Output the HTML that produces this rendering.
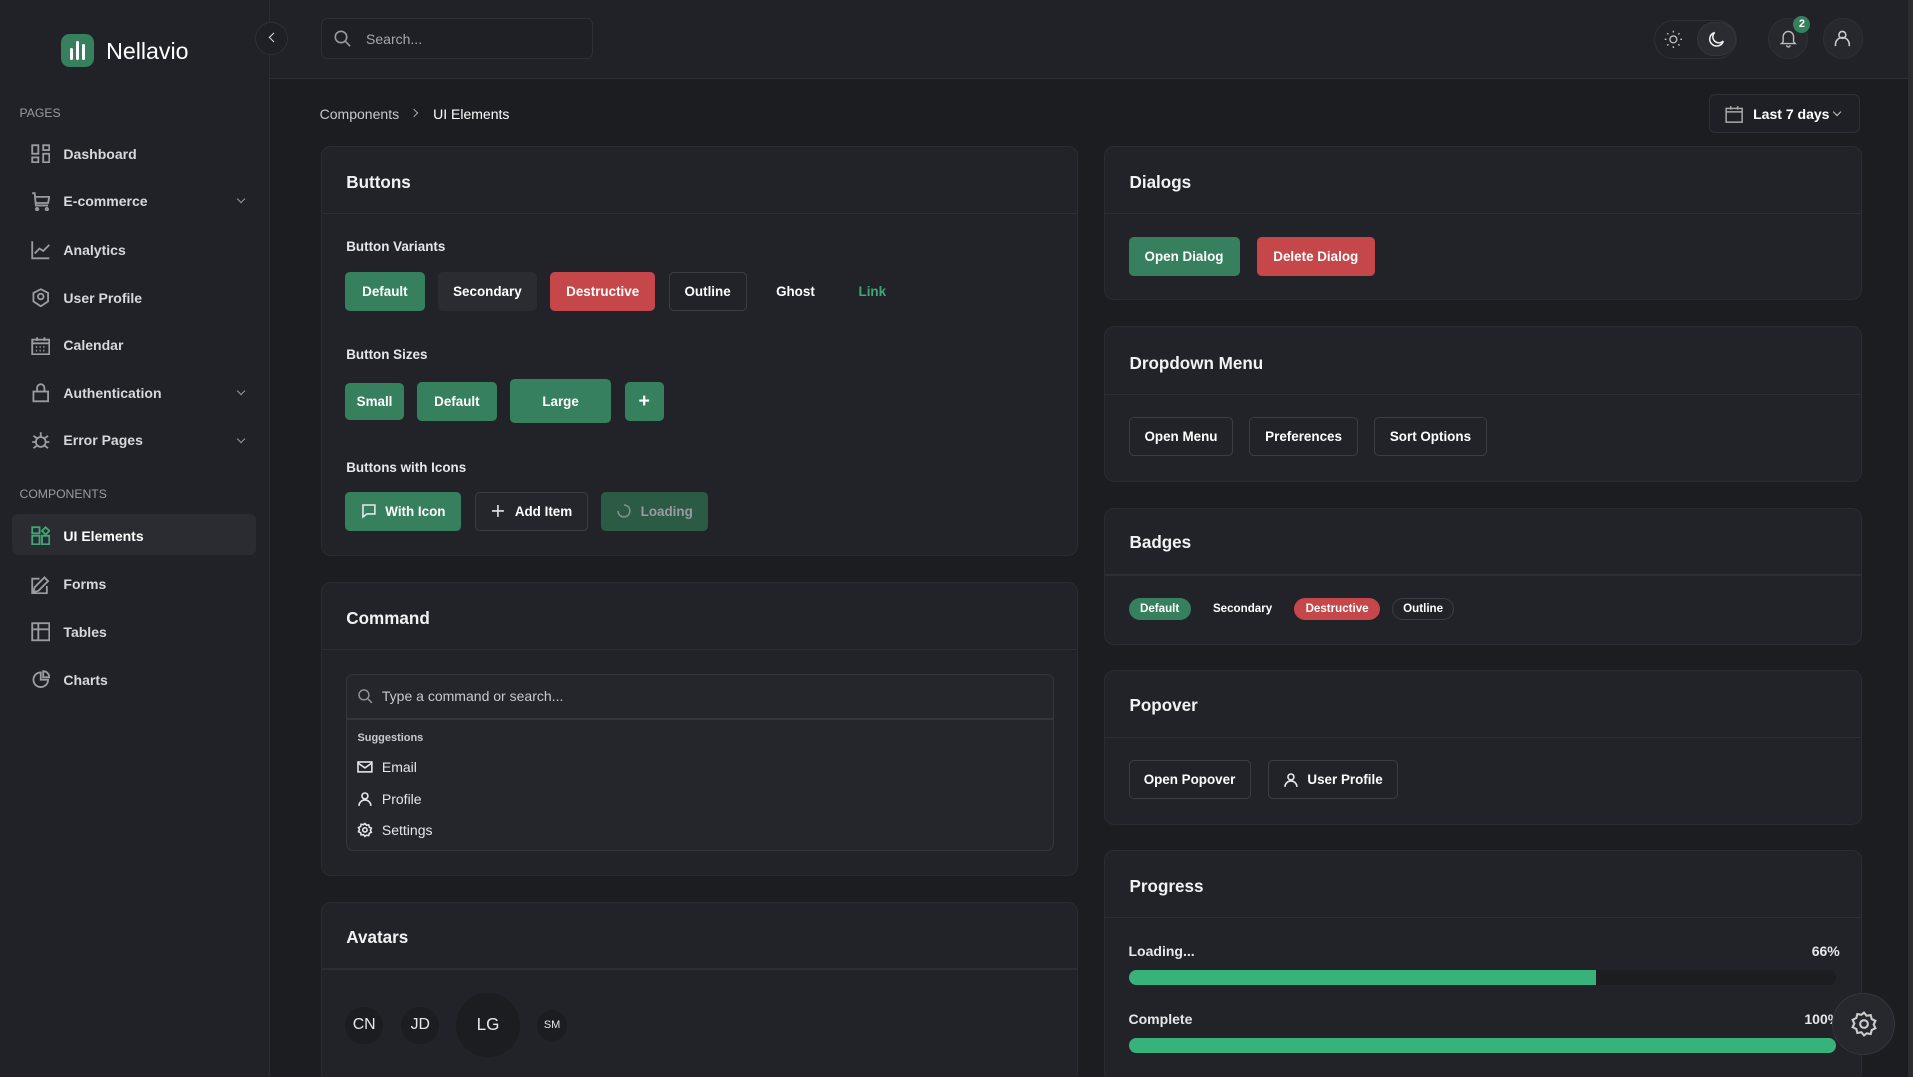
<!DOCTYPE html><html><head><meta charset="utf-8"><style>
*{box-sizing:border-box;margin:0;padding:0}
html,body{width:1913px;height:1077px;overflow:hidden;background:#1b1d21}
#r{zoom:1.22;width:1568px;height:883px;position:relative;font-family:"Liberation Sans",sans-serif;color:#e6e7ea;overflow:hidden;background:#1b1d21}
.a{position:absolute}
.side{left:0;top:0;width:221px;height:883px;background:#202227;border-right:1px solid #2a2c31}
.hdr{left:221px;top:0;right:0;height:65px;background:#202227;border-bottom:1px solid #2c2e33}
.nav{position:absolute;left:25px;font-size:11.5px;font-weight:bold;color:#d7d8db;display:flex;align-items:center;gap:11px}
.nav svg{width:16px;height:16px;fill:none;stroke:#9a9ca2;stroke-width:1.5}
.chev{position:absolute;left:195px;width:5px;height:5px;border-right:1.2px solid #9a9ca2;border-bottom:1.2px solid #9a9ca2;transform:rotate(45deg)}
.sec{position:absolute;left:16px;font-size:10px;color:#9a9ca2}
.card{position:absolute;background:#212328;border:1px solid #2a2c31;border-radius:8px;overflow:hidden}
.card h2{position:absolute;left:20px;font-size:14px;font-weight:bold;color:#f2f2f4}
.card .dv{position:absolute;left:0;right:0;height:1px;background:#2c2e33}
.lbl{position:absolute;left:20px;font-size:11px;font-weight:bold;color:#e6e7ea}
.b{position:absolute;height:32px;border-radius:4px;font-size:11px;font-weight:bold;display:flex;align-items:center;justify-content:center;gap:7px;color:#fff}
.g{background:#36805e}.rd{background:#c5474a}.s{background:#2a2c31}.o{border:1px solid #3a3d42;background:#212328}
.bd{position:absolute;top:490px;height:18px;border-radius:9px;font-size:9.5px;font-weight:bold;display:flex;align-items:center;justify-content:center;color:#fff}
.av{position:absolute;border-radius:50%;background:#1b1d21;display:flex;align-items:center;justify-content:center;font-size:13px;color:#e6e7ea}
.ic{width:13px;height:13px;fill:none;stroke:#e6e7ea;stroke-width:1.6}
</style></head><body><div id="r">
<div class="a side"></div>
<div class="a hdr"></div>
<div class="a" style="left:50px;top:28px;width:27px;height:27px;border-radius:7px;background:#36805e"></div>
<div class="a" style="left:57px;top:39px;width:3px;height:10px;background:#fff;border-radius:2px"></div>
<div class="a" style="left:62px;top:34px;width:3px;height:15px;background:#fff;border-radius:2px"></div>
<div class="a" style="left:67px;top:36px;width:3px;height:13px;background:#fff;border-radius:2px"></div>
<div class="a" style="left:87px;top:31px;font-size:19px;color:#fff">Nellavio</div>
<div class="a" style="left:209px;top:18px;width:27px;height:27px;border-radius:50%;border:1px solid #2e3035;background:#1e2025"></div>
<div class="a" style="left:221px;top:28px;width:6px;height:6px;border-left:1.5px solid #ddd;border-bottom:1.5px solid #ddd;transform:rotate(45deg)"></div>
<div class="a" style="left:263px;top:15px;width:223px;height:33px;border:1px solid #2e3035;border-radius:5px;background:#1e2025"></div>
<svg class="a" style="left:273px;top:24px" width="15" height="15" viewBox="0 0 16 16" fill="none" stroke="#9a9ca2" stroke-width="1.4"><circle cx="7" cy="7" r="5"/><path d="M11 11l4 4"/></svg>
<div class="a" style="left:300px;top:25px;font-size:11.5px;color:#a5a7ad">Search...</div>
<div class="a" style="left:1356px;top:16px;width:68px;height:32px;border-radius:16px;border:1px solid #2e3035"></div>
<svg class="a" style="left:1363px;top:24px" width="17" height="17" viewBox="0 0 24 24" fill="none" stroke="#bbb" stroke-width="1.6"><circle cx="12" cy="12" r="4"/><path d="M12 2v2M12 20v2M2 12h2M20 12h2M4.9 4.9l1.4 1.4M17.7 17.7l1.4 1.4M4.9 19.1l1.4-1.4M17.7 6.3l1.4-1.4"/></svg>
<div class="a" style="left:1391px;top:18px;width:32px;height:28px;border-radius:14px;background:#2a2c31;border:1px solid #34363b"></div>
<svg class="a" style="left:1398px;top:24px" width="17" height="17" viewBox="0 0 24 24" fill="none" stroke="#eee" stroke-width="1.8"><path d="M20 14A8 8 0 1 1 10 4a6 6 0 0 0 10 10z"/></svg>
<div class="a" style="left:1449px;top:15px;width:33px;height:33px;border-radius:50%;background:#26282d;border:1px solid #2e3035"></div>
<svg class="a" style="left:1457px;top:23px" width="17" height="17" viewBox="0 0 24 24" fill="none" stroke="#bbb" stroke-width="1.6"><path d="M6 16V10a6 6 0 0 1 12 0v6l2 2H4z M10 20a2 2 0 0 0 4 0"/></svg>
<div class="a" style="left:1470px;top:13px;width:14px;height:14px;border-radius:50%;background:#36805e;font-size:9px;font-weight:bold;color:#fff;text-align:center;line-height:14px">2</div>
<div class="a" style="left:1494px;top:15px;width:33px;height:33px;border-radius:50%;background:#26282d;border:1px solid #2e3035"></div>
<svg class="a" style="left:1502px;top:23px" width="17" height="17" viewBox="0 0 24 24" fill="none" stroke="#ccc" stroke-width="1.8"><circle cx="12" cy="8" r="4"/><path d="M4 21v-2a6 6 0 0 1 16 0v2"/></svg>
<div class="a" style="left:1564px;top:0;width:4px;height:883px;background:#2a2c31"></div>

<div class="sec" style="top:87px">PAGES</div>
<div class="nav" style="top:118px"><svg viewBox="0 0 16 16"><rect x="1" y="1" width="5" height="7"/><rect x="10" y="1" width="5" height="4"/><rect x="1" y="11" width="5" height="4"/><rect x="10" y="8" width="5" height="7"/></svg>Dashboard</div>
<div class="nav" style="top:157px"><svg viewBox="0 0 16 16"><path d="M1 1h2l1 10h10M4 4h11l-1 5H4"/><circle cx="5" cy="14" r="1"/><circle cx="13" cy="14" r="1"/></svg>E-commerce</div><div class="chev" style="top:161px"></div>
<div class="nav" style="top:197px"><svg viewBox="0 0 16 16"><path d="M1 1v14h14M3 11l4-4 3 2 5-5"/></svg>Analytics</div>
<div class="nav" style="top:236px"><svg viewBox="0 0 16 16"><path d="M8 1l6 3v7l-6 4-6-4V4z"/><circle cx="8" cy="7" r="2.3"/></svg>User Profile</div>
<div class="nav" style="top:275px"><svg viewBox="0 0 16 16"><rect x="1" y="3" width="14" height="12"/><path d="M1 6h14M5 1v3M11 1v3M4 9h1M7 9h1M10 9h1M4 12h1M7 12h1M10 12h1"/></svg>Calendar</div>
<div class="nav" style="top:314px"><svg viewBox="0 0 16 16"><rect x="2" y="7" width="12" height="8"/><path d="M5 7V4a3 3 0 0 1 6 0v3"/></svg>Authentication</div><div class="chev" style="top:318px"></div>
<div class="nav" style="top:353px"><svg viewBox="0 0 16 16"><circle cx="8" cy="9" r="4"/><path d="M1 9h3M12 9h3M2 4l3 2M14 4l-3 2M2 14l3-2M14 14l-3-2M8 5V1"/></svg>Error Pages</div><div class="chev" style="top:357px"></div>
<div class="sec" style="top:399px">COMPONENTS</div>
<div class="a" style="left:10px;top:421px;width:200px;height:34px;border-radius:5px;background:#2a2c31"></div>
<div class="nav" style="top:431px;color:#fff"><svg viewBox="0 0 16 16" style="stroke:#3fa877"><rect x="1" y="8" width="6" height="7"/><rect x="9" y="8" width="6" height="7"/><rect x="1" y="1" width="6" height="5"/><path d="M12 1l3 3-3 3-3-3z"/></svg>UI Elements</div>
<div class="nav" style="top:471px"><svg viewBox="0 0 16 16"><path d="M2 14l1-4 8-8 3 3-8 8zM13 9v6H1V3h6"/></svg>Forms</div>
<div class="nav" style="top:510px"><svg viewBox="0 0 16 16"><rect x="1" y="1" width="14" height="14"/><path d="M1 6h14M6 1v14"/></svg>Tables</div>
<div class="nav" style="top:549px"><svg viewBox="0 0 16 16"><path d="M8 2a6 6 0 1 0 6 6H8z"/><path d="M10 1a5 5 0 0 1 5 5h-5z"/></svg>Charts</div>

<div class="a" style="left:262px;top:87px;font-size:11.5px;color:#c8c9cd">Components</div>
<div class="a" style="left:337px;top:90px;width:5px;height:5px;border-right:1.2px solid #aaa;border-top:1.2px solid #aaa;transform:rotate(45deg)"></div>
<div class="a" style="left:355px;top:87px;font-size:11.5px;color:#fff">UI Elements</div>
<div class="a" style="left:1401px;top:77px;width:124px;height:32px;border:1px solid #2e3035;border-radius:5px;background:#1e2025"></div>
<svg class="a" style="left:1414px;top:86px" width="15" height="15" viewBox="0 0 16 16" fill="none" stroke="#aaa" stroke-width="1.3"><rect x="1" y="3" width="14" height="12"/><path d="M1 6h14M5 1v3M11 1v3"/></svg>
<div class="a" style="left:1437px;top:87px;font-size:11.5px;font-weight:bold;color:#fff">Last 7 days</div>
<div class="a" style="left:1503px;top:89px;width:5px;height:5px;border-right:1.2px solid #ccc;border-bottom:1.2px solid #ccc;transform:rotate(45deg)"></div>

<div class="card" style="left:263px;top:120px;width:621px;height:336px">
<h2 style="top:21px">Buttons</h2><div class="dv" style="top:54px"></div>
<div class="lbl" style="top:75px">Button Variants</div>
<div class="lbl" style="top:164px">Button Sizes</div>
<div class="lbl" style="top:256px">Buttons with Icons</div>
</div>
<div class="b g" style="left:283px;top:223px;width:65px">Default</div>
<div class="b s" style="left:359px;top:223px;width:81px">Secondary</div>
<div class="b rd" style="left:451px;top:223px;width:86px">Destructive</div>
<div class="b o" style="left:548px;top:223px;width:64px">Outline</div>
<div class="b" style="left:628px;top:223px;width:48px">Ghost</div>
<div class="b" style="left:696px;top:223px;width:38px;color:#3fa877">Link</div>
<div class="b g" style="left:283px;top:314px;width:48px;height:30px">Small</div>
<div class="b g" style="left:342px;top:313px;width:65px">Default</div>
<div class="b g" style="left:418px;top:311px;width:83px;height:36px">Large</div>
<div class="b g" style="left:512px;top:313px;width:32px;font-size:16px">+</div>
<div class="b g" style="left:283px;top:403px;width:95px"><svg class="ic" viewBox="0 0 16 16"><path d="M2 2h12v9H6l-4 3z"/></svg>With Icon</div>
<div class="b o" style="left:389px;top:403px;width:93px;background:#24262b"><svg class="ic" viewBox="0 0 16 16"><path d="M8 2v12M2 8h12"/></svg>Add Item</div>
<div class="b" style="left:493px;top:403px;width:87px;background:#2b5a45;color:#9a9ca2"><svg class="ic" viewBox="0 0 16 16" style="stroke:#8a8c90"><path d="M8 2a6 6 0 1 1-6 6"/></svg>Loading</div>

<div class="card" style="left:263px;top:477px;width:621px;height:241px">
<h2 style="top:21px">Command</h2><div class="dv" style="top:54px"></div>
<div class="a" style="left:20px;top:75px;width:580px;height:145px;border:1px solid #33353a;border-radius:6px;background:#24262b"></div>
<div class="a" style="left:20px;top:111px;width:580px;height:1px;background:#33353a"></div>
</div>
<svg class="a" style="left:293px;top:564px" width="13" height="13" viewBox="0 0 16 16" fill="none" stroke="#999" stroke-width="1.4"><circle cx="7" cy="7" r="5"/><path d="M11 11l4 4"/></svg>
<div class="a" style="left:313px;top:564px;font-size:11.5px;color:#c8c9cd">Type a command or search...</div>
<div class="a" style="left:293px;top:600px;font-size:9px;font-weight:bold;color:#c8c9cd">Suggestions</div>
<svg class="a ic" style="left:293px;top:622px" viewBox="0 0 16 16"><rect x="1" y="3" width="14" height="10"/><path d="M1 4l7 5 7-5"/></svg>
<div class="a" style="left:313px;top:622px;font-size:11.5px">Email</div>
<svg class="a ic" style="left:293px;top:648px" viewBox="0 0 16 16"><circle cx="8" cy="5" r="3"/><path d="M2 15a6 6 0 0 1 12 0"/></svg>
<div class="a" style="left:313px;top:648px;font-size:11.5px">Profile</div>
<svg class="a ic" style="left:293px;top:674px" viewBox="0 0 16 16"><circle cx="8" cy="8" r="2.2"/><path d="M8 1.5l1.5 1.8 2.3-.4.6 2.3 2.1 1-1 2.1 1 2.1-2.1 1-.6 2.3-2.3-.4L8 14.5l-1.5-1.8-2.3.4-.6-2.3-2.1-1 1-2.1-1-2.1 2.1-1 .6-2.3 2.3.4z"/></svg>
<div class="a" style="left:313px;top:674px;font-size:11.5px">Settings</div>

<div class="card" style="left:263px;top:739px;width:621px;height:150px">
<h2 style="top:21px">Avatars</h2><div class="dv" style="top:54px"></div></div>
<div class="av" style="left:283px;top:825px;width:31px;height:31px">CN</div>
<div class="av" style="left:329px;top:825px;width:31px;height:31px">JD</div>
<div class="av" style="left:374px;top:814px;width:52px;height:52px;font-size:14px">LG</div>
<div class="av" style="left:440px;top:828px;width:25px;height:25px;font-size:9px">SM</div>

<div class="card" style="left:905px;top:120px;width:621px;height:126px"><h2 style="top:21px">Dialogs</h2><div class="dv" style="top:54px"></div></div>
<div class="b g" style="left:925px;top:194px;width:91px">Open Dialog</div>
<div class="b rd" style="left:1030px;top:194px;width:97px">Delete Dialog</div>

<div class="card" style="left:905px;top:267px;width:621px;height:128px"><h2 style="top:22px">Dropdown Menu</h2><div class="dv" style="top:55px"></div></div>
<div class="b o" style="left:925px;top:342px;width:86px">Open Menu</div>
<div class="b o" style="left:1024px;top:342px;width:89px">Preferences</div>
<div class="b o" style="left:1126px;top:342px;width:93px">Sort Options</div>

<div class="card" style="left:905px;top:416px;width:621px;height:113px"><h2 style="top:20px">Badges</h2><div class="dv" style="top:54px"></div></div>
<div class="bd g" style="left:925px;width:51px">Default</div>
<div class="bd s" style="left:986px;width:65px;background:#212328">Secondary</div>
<div class="bd rd" style="left:1061px;width:70px">Destructive</div>
<div class="bd" style="left:1141px;width:51px;border:1px solid #3a3d42">Outline</div>

<div class="card" style="left:905px;top:549px;width:621px;height:127px"><h2 style="top:21px">Popover</h2><div class="dv" style="top:54px"></div></div>
<div class="b o" style="left:925px;top:623px;width:100px">Open Popover</div>
<div class="b o" style="left:1039px;top:623px;width:107px"><svg class="ic" viewBox="0 0 16 16"><circle cx="8" cy="5" r="3"/><path d="M2 15a6 6 0 0 1 12 0"/></svg>User Profile</div>

<div class="card" style="left:905px;top:697px;width:621px;height:190px"><h2 style="top:21px">Progress</h2><div class="dv" style="top:54px"></div></div>
<div class="a" style="left:925px;top:773px;font-size:11.5px;font-weight:bold">Loading...</div>
<div class="a" style="left:1485px;top:773px;font-size:11.5px;font-weight:bold">66%</div>
<div class="a" style="left:925px;top:795px;width:580px;height:12px;border-radius:6px;background:#1b1d21"></div>
<div class="a" style="left:925px;top:795px;width:383px;height:12px;border-radius:6px 0 0 6px;background:#36b27a"></div>
<div class="a" style="left:925px;top:829px;font-size:11.5px;font-weight:bold">Complete</div>
<div class="a" style="left:1479px;top:829px;font-size:11.5px;font-weight:bold">100%</div>
<div class="a" style="left:925px;top:851px;width:580px;height:12px;border-radius:6px;background:#36b27a"></div>

<div class="a" style="left:1502px;top:814px;width:51px;height:51px;border-radius:50%;background:#26282d;border:1px solid #33353a"></div>
<svg class="a" style="left:1516px;top:828px" width="23" height="23" viewBox="0 0 16 16" fill="none" stroke="#ccc" stroke-width="1.2"><circle cx="8" cy="8" r="2.2"/><path d="M8 1.5l1.5 1.8 2.3-.4.6 2.3 2.1 1-1 2.1 1 2.1-2.1 1-.6 2.3-2.3-.4L8 14.5l-1.5-1.8-2.3.4-.6-2.3-2.1-1 1-2.1-1-2.1 2.1-1 .6-2.3 2.3.4z"/></svg>
</div></body></html>
